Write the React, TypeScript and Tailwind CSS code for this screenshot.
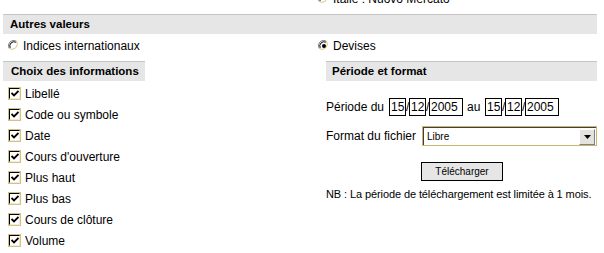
import React from "react";

function Radio({ checked = false }: { checked?: boolean }) {
    return (
        <svg width="12" height="12" viewBox="0 0 12 12" className="shrink-0">
            <circle cx="6" cy="6" r="5.5" fill="#ffffff" />
            <path d="M1.2 8.5 A5.3 5.3 0 0 1 8.5 1.2" stroke="#808080" strokeWidth="1" fill="none" />
            <path d="M2.2 7.8 A4.2 4.2 0 0 1 7.8 2.2" stroke="#000000" strokeWidth="1" fill="none" />
            <path d="M8.5 1.2 A5.3 5.3 0 0 1 1.2 8.5" stroke="#d6c47a" strokeWidth="1" fill="none" />
            {checked && <circle cx="6" cy="6" r="2" fill="#000000" />}
        </svg>
    );
}

function Checkbox() {
    return (
        <div className="w-[13px] h-[13px] shrink-0 border border-[#d2c28a] bg-white">
            <div className="w-full h-full border-t border-l border-black border-b border-r border-b-[#f1ecd6] border-r-[#f1ecd6] flex items-center justify-center">
                <svg width="8" height="7" viewBox="0 0 8 7">
                    <path d="M0.5 3 L3 5.5 L7.5 1" stroke="#000" strokeWidth="1.8" fill="none" />
                </svg>
            </div>
        </div>
    );
}

function Header({ children, className = "" }: { children: React.ReactNode; className?: string }) {
    return (
        <div
            className={`h-[20px] border-t border-[#c4c4c4] bg-[#e6e6e6] flex items-center font-bold text-[11.5px] ${className}`}
        >
            {children}
        </div>
    );
}

function DateBox({ value, wide = false }: { value: string; wide?: boolean }) {
    return (
        <div
            className={`h-[18px] border border-black bg-white pl-[1px] flex items-center leading-none overflow-hidden ${wide ? "w-[34px]" : "w-[17px]"}`}
        >
            {value}
        </div>
    );
}

const fields = [
    "Libellé",
    "Code ou symbole",
    "Date",
    "Cours d'ouverture",
    "Plus haut",
    "Plus bas",
    "Cours de clôture",
    "Volume",
];

export default function App() {
    return (
        <div className="w-[604px] h-[253px] overflow-hidden bg-white text-black text-[12px] font-['Liberation_Sans',Arial,sans-serif]">
            {/* clipped row from above */}
            <div className="h-[14px] overflow-hidden">
                <div className="-mt-[8px] h-[14px] pl-[318px] flex items-center gap-[3px]">
                    <Radio />
                    <span>Italie : Nuovo Mercato</span>
                </div>
            </div>

            {/* Autres valeurs */}
            <Header className="ml-[3px] w-[594px] pl-[7px]">Autres valeurs</Header>

            <div className="h-[23px] flex items-center">
                <div className="w-[318px] pl-[8px] flex items-center gap-[3px]">
                    <Radio />
                    <span>Indices internationaux</span>
                </div>
                <div className="flex items-center gap-[3px]">
                    <Radio checked />
                    <span>Devises</span>
                </div>
            </div>

            <div className="mt-[4px] flex">
                {/* Left column */}
                <div className="w-[326px]">
                    <Header className="ml-[3px] w-[142px] pl-[8px]">Choix des informations</Header>
                    <div className="pt-[2px]">
                        {fields.map((f) => (
                            <div key={f} className="h-[21px] pl-[8px] flex items-center gap-[4px]">
                                <Checkbox />
                                <span>{f}</span>
                            </div>
                        ))}
                    </div>
                </div>

                {/* Right column */}
                <div className="w-[271px]">
                    <Header className="pl-[6px]">Période et format</Header>

                    <div className="mt-[17px] h-[18px] flex items-center">
                        <span className="w-[63px]">Période du</span>
                        <DateBox value="15" />
                        <span className="w-[3px]">/</span>
                        <DateBox value="12" />
                        <span className="w-[3px]">/</span>
                        <DateBox value="2005" wide />
                        <span className="w-[22px] pl-[4px]">au</span>
                        <DateBox value="15" />
                        <span className="w-[3px]">/</span>
                        <DateBox value="12" />
                        <span className="w-[3px]">/</span>
                        <DateBox value="2005" wide />
                    </div>

                    <div className="mt-[10px] h-[20px] flex items-center">
                        <span className="w-[96px]">Format du fichier</span>
                        <div className="w-[175px] h-[20px] border border-[#c9b56c] bg-white">
                            <div className="h-full border-t border-l border-[#404040] flex items-center">
                                <span className="flex-1 pl-[3px] text-[10px]">Libre</span>
                                <div className="w-[16px] h-[16px] mr-[1px] bg-[#e4e2dc] border border-t-white border-l-white border-b-[#808080] border-r-[#808080] flex items-center justify-center">
                                    <svg width="7" height="4" viewBox="0 0 7 4">
                                        <path d="M0 0 H7 L3.5 4 Z" fill="#000" />
                                    </svg>
                                </div>
                            </div>
                        </div>
                    </div>

                    <div className="mt-[16px] pl-[95px]">
                        <button className="w-[82px] h-[19px] border border-black bg-[#e6e6e6] text-[10px] flex items-center justify-center">
                            Télécharger
                        </button>
                    </div>

                    <div className="mt-[6px] h-[14px] flex items-center text-[11px] tracking-[-0.1px]">
                        NB : La période de téléchargement est limitée à 1 mois.
                    </div>
                </div>
            </div>
        </div>
    );
}
